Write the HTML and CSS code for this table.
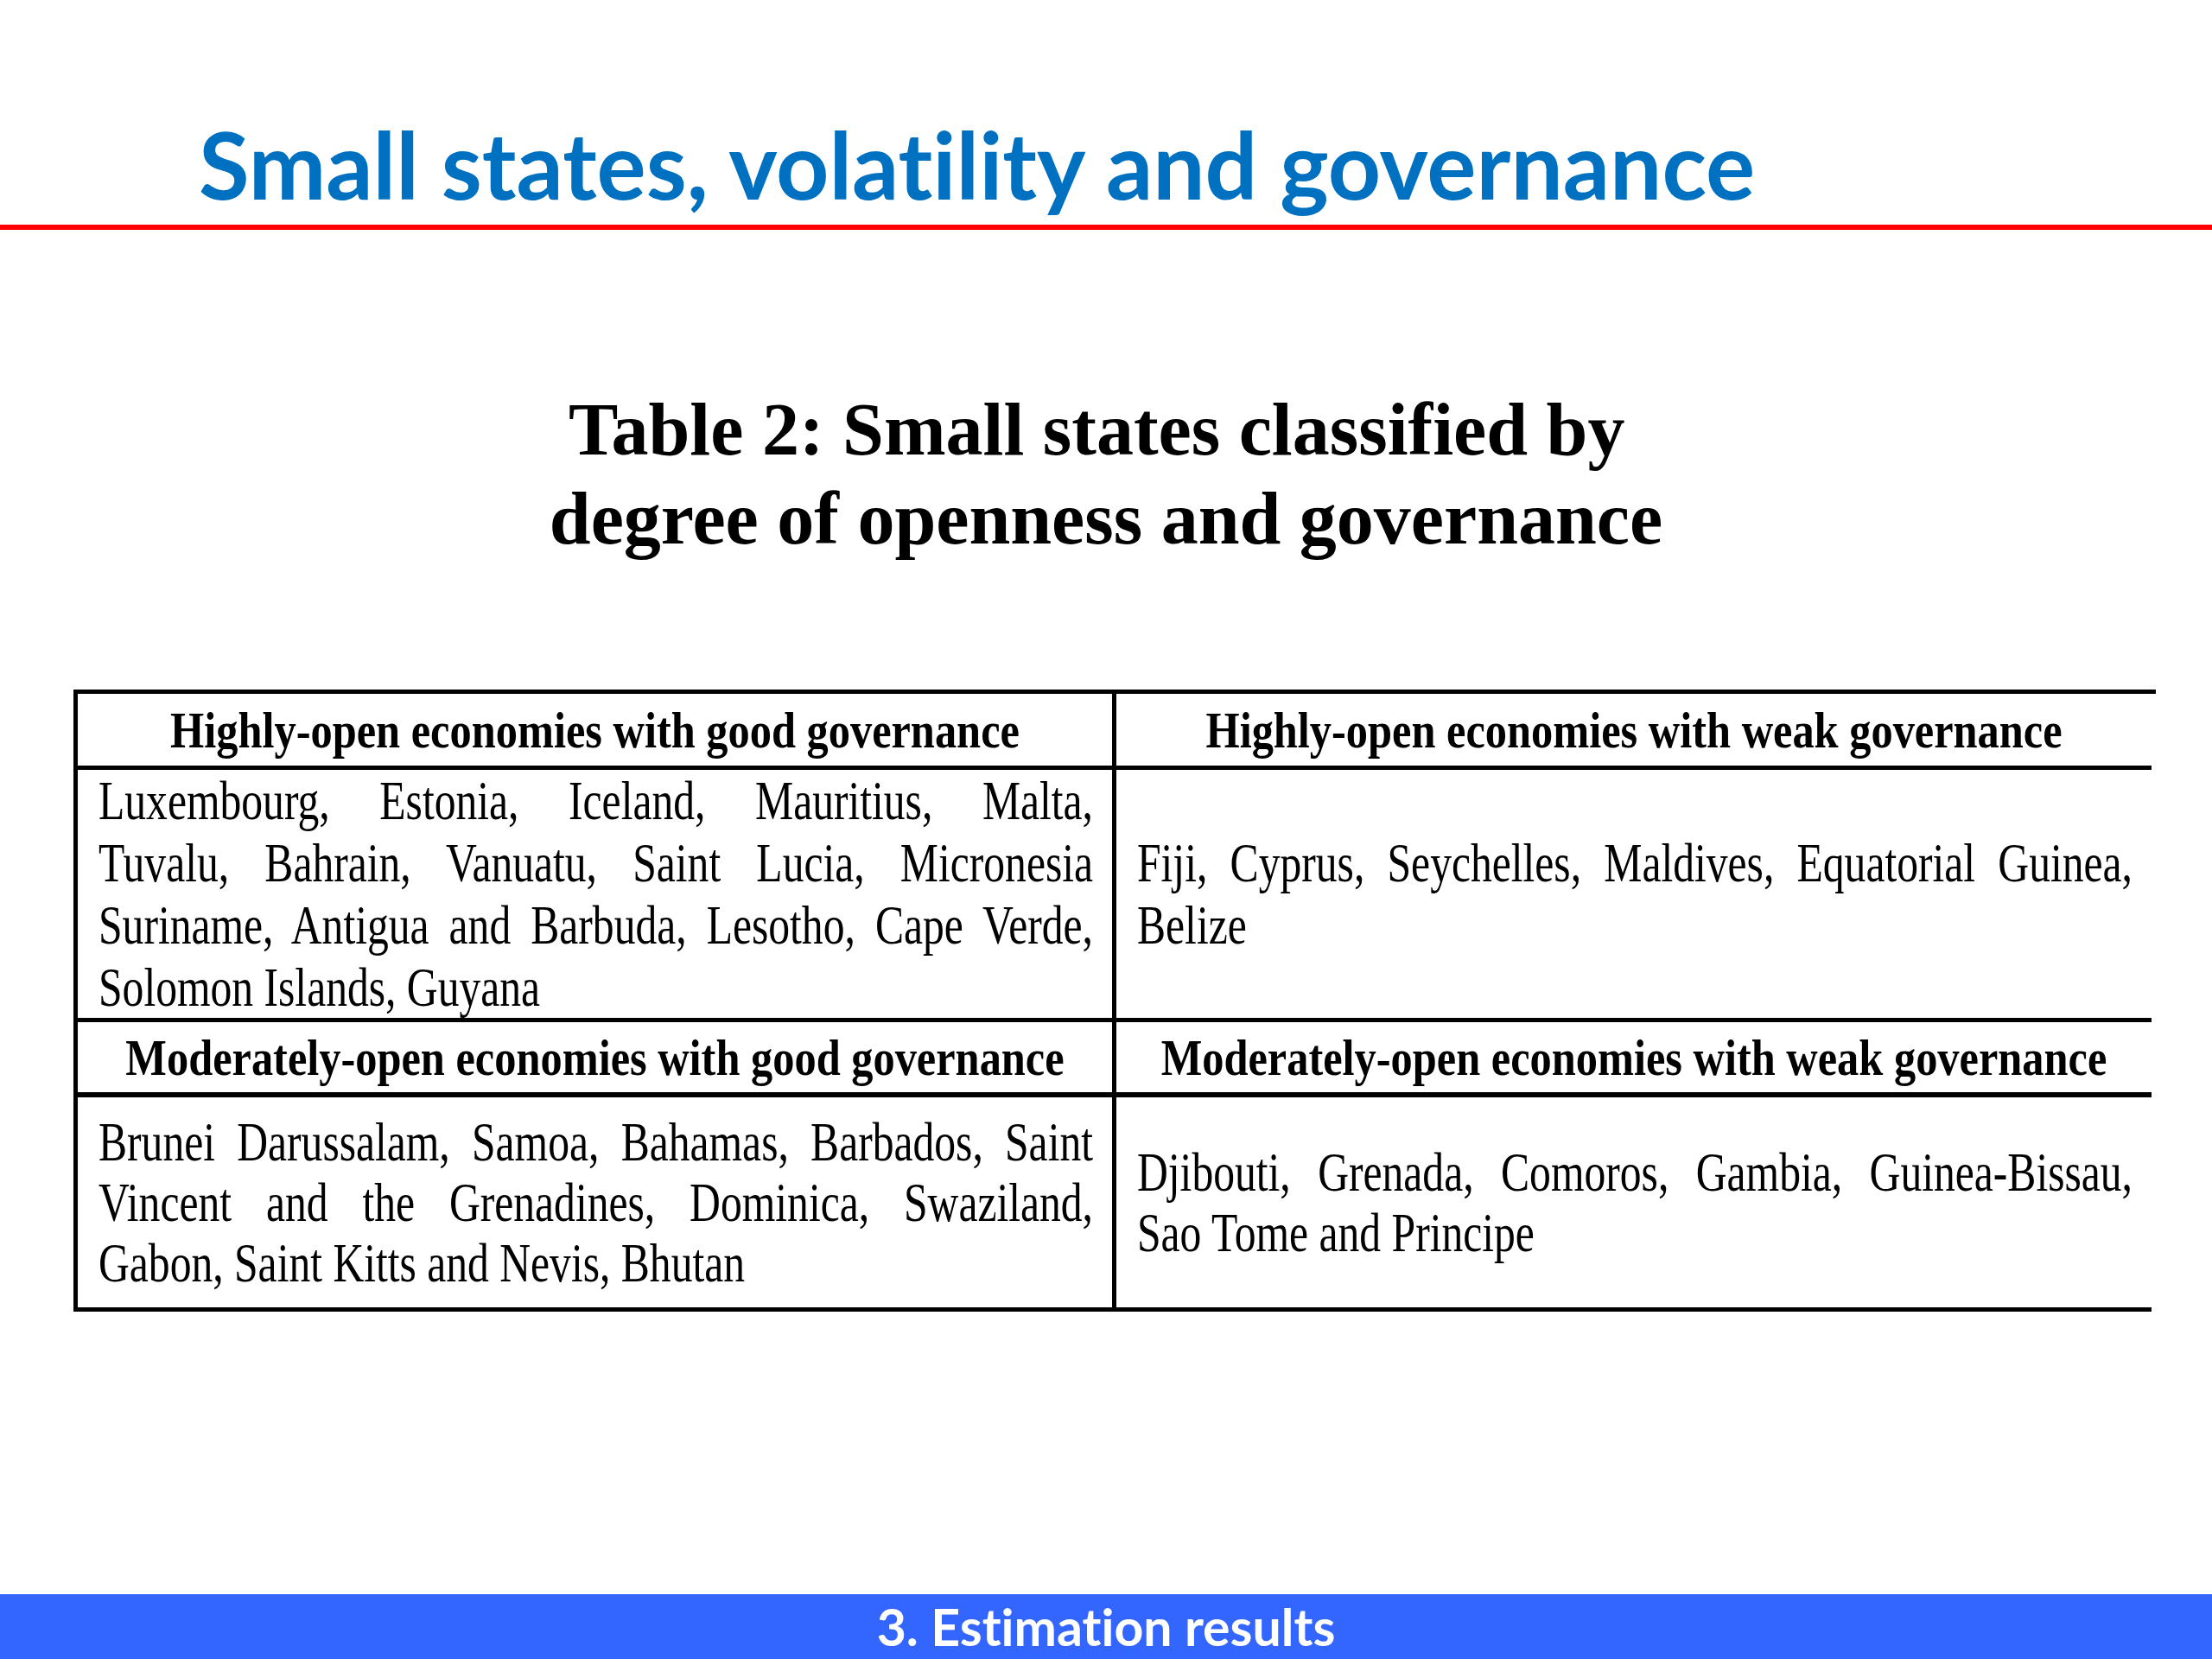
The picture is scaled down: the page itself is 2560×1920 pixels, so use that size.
FILE: index.html
```html
<!DOCTYPE html>
<html lang="en">
<head>
<meta charset="utf-8">
<title>Small states, volatility and governance</title>
<link rel="stylesheet" href="styles.css">
</head>
<body>
<div class="slide">
  <header class="slide-head">
    <h1 class="slide-title">Small states, volatility and governance</h1>
  </header>
  <div class="rule"></div>

  <h2 class="caption">Table 2: Small states classified by&nbsp;<br>degree of openness and governance</h2>

  <div class="tbl">
    <div class="cell head left"><div class="hq">Highly-open economies with good governance</div></div>
    <div class="cell head right"><div class="hq">Highly-open economies with weak governance</div></div>

    <div class="cell body left r1">
      <div class="sq">
        <span class="ln">Luxembourg, Estonia, Iceland, Mauritius, Malta,</span>
        <span class="ln">Tuvalu, Bahrain, Vanuatu, Saint Lucia, Micronesia</span>
        <span class="ln">Suriname, Antigua and Barbuda, Lesotho, Cape Verde,</span>
        <span class="ln last">Solomon Islands, Guyana</span>
      </div>
    </div>
    <div class="cell body right r1">
      <div class="sq">
        <span class="ln">Fiji, Cyprus, Seychelles, Maldives, Equatorial Guinea,</span>
        <span class="ln last">Belize</span>
      </div>
    </div>

    <div class="cell head left h2row"><div class="hq">Moderately-open economies with good governance</div></div>
    <div class="cell head right h2row"><div class="hq">Moderately-open economies with weak governance</div></div>

    <div class="cell body left r2">
      <div class="sq">
        <span class="ln">Brunei Darussalam, Samoa, Bahamas, Barbados, Saint</span>
        <span class="ln">Vincent and the Grenadines, Dominica, Swaziland,</span>
        <span class="ln last">Gabon, Saint Kitts and Nevis, Bhutan</span>
      </div>
    </div>
    <div class="cell body right r2">
      <div class="sq">
        <span class="ln">Djibouti, Grenada, Comoros, Gambia, Guinea-Bissau,</span>
        <span class="ln last">Sao Tome and Principe</span>
      </div>
    </div>
  </div>

  <div class="spacer"></div>
  <footer class="foot">3. Estimation results</footer>
</div>
</body>
</html>
```

FILE: styles.css
```css
html, body {
  margin: 0;
  padding: 0;
  background: #ffffff;
}

.slide {
  width: 2560px;
  height: 1920px;
  display: flex;
  flex-direction: column;
  overflow: hidden;
  background: #ffffff;
}

.slide-head {
  padding: 126px 0 0 230px;
}

.slide-title {
  margin: 0;
  font-family: Lato, "Open Sans", sans-serif;
  font-weight: 700;
  font-size: 107px;
  line-height: 128px;
  height: 128px;
  color: #0070c0;
  white-space: nowrap;
  font-variant-ligatures: none;
}

.rule {
  margin-top: 6px;
  height: 6px;
  background: #ff0000;
}

.caption {
  margin: 180px 0 0 0;
  font-family: "Liberation Serif", "Times New Roman", serif;
  font-weight: 700;
  font-size: 86px;
  line-height: 103px;
  text-align: center;
  color: #000000;
}

.tbl {
  margin: 146px 0 0 85px;
  width: 2405px;
  display: grid;
  grid-template-columns: 1202px 1198px;
  grid-template-rows: 88px 292px 87px 248px;
  border-top: 5px solid #000;
  border-left: 5px solid #000;
  font-family: "Liberation Serif", "Times New Roman", serif;
  color: #000;
}

.cell {
  box-sizing: border-box;
  border-bottom: 5px solid #000;
  display: flex;
  flex-direction: column;
  justify-content: center;
  min-width: 0;
}

.cell.left {
  border-right: 5px solid #000;
}

.cell.h2row {
  border-bottom-width: 6px;
}

.cell.head {
  padding: 0 10px;
}

.hq {
  width: calc(100% / 0.84);
  transform: scaleX(0.84);
  transform-origin: 0 50%;
  font-weight: 700;
  font-size: 60px;
  line-height: 70px;
  text-align: center;
  white-space: nowrap;
}

.cell.body {
  padding: 0 22px 0 24px;
}

.sq {
  width: calc(100% / 0.775);
  transform: scaleX(0.775);
  transform-origin: 0 50%;
  font-size: 64px;
  line-height: 72px;
}

.r2 .sq {
  line-height: 70px;
}

.ln {
  display: block;
  text-align: justify;
  text-align-last: justify;
  white-space: nowrap;
}

.ln.last {
  text-align-last: left;
}

.spacer {
  flex: 1;
}

.foot {
  height: 75px;
  background: #3366ff;
  color: #ffffff;
  font-family: Lato, "Open Sans", sans-serif;
  font-weight: 700;
  font-size: 59px;
  line-height: 75px;
  text-align: center;
  font-variant-ligatures: none;
}
```
